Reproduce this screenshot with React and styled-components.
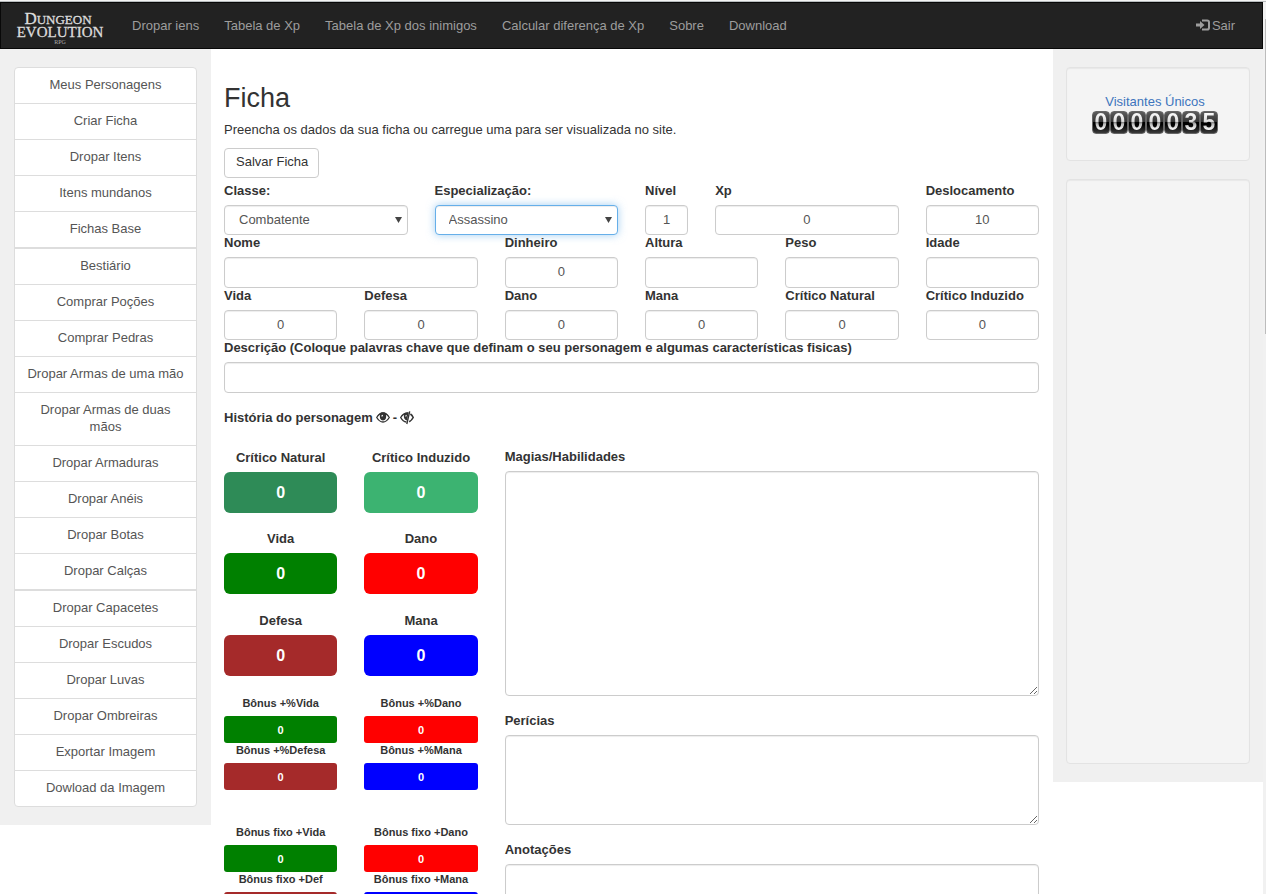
import React from "react";
import styled, { createGlobalStyle, css } from "styled-components";

const Global = createGlobalStyle`
  *, *::before, *::after { box-sizing: border-box; }
  body {
    margin: 0;
    background: #fff;
    color: #333;
    font: 13px/17px "Liberation Sans", Arial, sans-serif;
  }
  a { text-decoration: none; }
`;

const Shell = styled.div`
  display: grid;
  grid-template-columns: minmax(0, 1fr) 3px;
  height: 100vh;
  border-top: 1px solid #f4f4f4;
`;
const Page = styled.div`
  border-top: 1px solid #b8bcbe;
  overflow-y: auto;
  scrollbar-width: none;
`;
const Track = styled.div`
  background: #f1f1f1;
  border-top: 1px solid #b8bcbe;
  padding: 17px 0 0 2px;
`;
const Thumb = styled.div`
  height: 36%;
  background: #bcbcbc;
`;

const Navbar = styled.nav`
  display: flex;
  align-items: center;
  height: 47px;
  padding: 0 14px;
  background: #222;
  border: 1px solid #080808;
`;
const Brand = styled.a`
  display: block;
  margin-right: 15px;
  svg { display: block; }
`;
const NavLink = styled.a`
  padding: 0 13px 0 12px;
  color: #9d9d9d;
  white-space: nowrap;
`;
const Logout = styled(NavLink)`
  display: flex;
  align-items: center;
  gap: 2px;
  margin-left: auto;
`;

const Columns = styled.div`
  display: grid;
  grid-template-columns: 211px minmax(0, 1fr) 210px;
  align-items: start;
`;
const LeftColumn = styled.aside`
  padding: 18px 14px;
  background: #f0f0f0;
`;
const RightColumn = styled.aside`
  display: grid;
  gap: 18px;
  padding: 18px 13px;
  background: #f0f0f0;
`;
const Main = styled.main`
  padding: 35px 14px 18px 13px;
`;

const Menu = styled.div`
  &:first-child a:first-child { border-radius: 4px 4px 0 0; }
  &:last-child a:last-child { border-radius: 0 0 4px 4px; }
`;
const MenuItem = styled.a`
  display: block;
  padding: 8px 8px 10px;
  background: #fff;
  border: 1px solid #ddd;
  color: #555;
  text-align: center;
  & + & { margin-top: -1px; }
`;

const Well = styled.section`
  min-height: ${(p) => (p.$tall ? 585 : 94)}px;
  padding: 25px 22px 25px 16px;
  background: #f4f4f4;
  border: 1px solid #e3e3e3;
  border-radius: 4px;
  box-shadow: inset 0 1px 1px rgba(0, 0, 0, 0.05);
  text-align: center;
`;
const CounterLink = styled.a`
  color: #3d74bd;
`;
const Digits = styled.div`
  display: flex;
  justify-content: center;
  margin-top: 1px;
`;
const Digit = styled.span`
  width: 18px;
  height: 23px;
  border: 1px solid #666;
  border-radius: 4px;
  background: linear-gradient(#5c5c5c 0, #333 48%, #000 50%, #000 60%, #3a3a3a 100%);
  font: bold 23px/21px "Liberation Sans Narrow", "Liberation Sans", Arial, sans-serif;
  text-align: center;
  span {
    display: block;
    margin: 0 -1px;
    color: transparent;
    background: linear-gradient(#fff 0, #ddd 45%, #888 50%, #bbb 58%, #fff 85%);
    background-clip: text;
  }
`;

const Title = styled.h2`
  margin: 0 0 9px;
  font-size: 27px;
  font-weight: 400;
  line-height: 28px;
`;
const Intro = styled.p`
  margin: 0 0 10px;
`;
const SaveButton = styled.button`
  display: block;
  height: 30px;
  margin-bottom: 5px;
  padding: 0 10px 3px 11px;
  background: #fff;
  border: 1px solid #ccc;
  border-radius: 4px;
  color: #333;
  font: inherit;
`;

const Row = styled.div`
  display: grid;
  grid-template-columns: repeat(12, minmax(0, 1fr));
  column-gap: 27px;
`;
const Field = styled.div`
  display: flex;
  flex-direction: column;
  grid-column: span ${(p) => p.$span};
`;
const Label = styled.label`
  margin-bottom: 7px;
  font-weight: 700;
  line-height: 15px;
  white-space: nowrap;
`;
const control = css`
  width: 100%;
  border: 1px solid #ccc;
  border-radius: 4px;
  background: #fff;
  box-shadow: inset 0 1px 1px rgba(0, 0, 0, 0.075);
  color: #555;
  font: inherit;
  outline: 0;
`;
const Input = styled.input`
  ${control}
  flex: 1;
  min-height: ${(p) => (p.$free ? 31 : 30)}px;
  padding: 0 11px 2px;
  text-align: ${(p) => (p.$free ? "left" : "center")};
`;
const SelectBox = styled.div`
  display: grid;
  align-items: center;
  > * { grid-area: 1 / 1; }
  svg { justify-self: end; margin-right: 6px; pointer-events: none; }
`;
const Select = styled.select`
  ${control}
  height: 30px;
  padding: 0 14px 2px;
  appearance: none;
  ${(p) => p.$active && css`
    padding-left: 13px;
    border-color: #66afe9;
    box-shadow: inset 0 1px 1px rgba(0, 0, 0, 0.075), 0 0 8px rgba(102, 175, 233, 0.6);
  `}
`;

const Story = styled.div`
  display: flex;
  align-items: center;
  gap: 3px;
  margin: 16px 0 22px;
  font-weight: 700;
`;
const IconButton = styled.button`
  display: flex;
  padding: 0;
  border: 0;
  background: none;
  color: #333;
`;

const Stats = styled.div`
  grid-column: span 4;
  display: grid;
  grid-template-columns: repeat(2, minmax(0, 1fr));
  column-gap: 27px;
  align-content: start;
  padding-top: 1px;
`;
const Stat = styled.div`
  display: flex;
  flex-direction: column;
  margin-bottom: ${(p) => p.$after}px;
  text-align: center;
  font-weight: 700;
  font-size: ${(p) => (p.$small ? 11 : 13)}px;
  label {
    margin-bottom: ${(p) => (p.$small ? 5 : 6)}px;
    line-height: ${(p) => (p.$small ? 15 : 17)}px;
    white-space: nowrap;
  }
  input {
    width: 100%;
    height: ${(p) => (p.$small ? 27 : 41)}px;
    padding: 0;
    border: 0;
    border-radius: ${(p) => (p.$small ? 3 : 6)}px;
    background: ${(p) => p.$color};
    color: #fff;
    font: inherit;
    font-size: ${(p) => (p.$small ? 11 : 16)}px;
    text-align: center;
  }
`;
const Notes = styled.div`
  grid-column: span 8;
  padding-top: 1px;
`;
const Note = styled.div`
  display: flex;
  flex-direction: column;
  margin-bottom: 17px;
`;
const TextArea = styled.textarea`
  ${control}
  display: block;
  height: ${(p) => p.$height}px;
  padding: 6px 12px;
  resize: vertical;
`;

const Logo = () => (
  <svg width="90" height="40" viewBox="0 0 90 40" fill="#dcdcdc" stroke="#dcdcdc" strokeWidth="0.3" fontFamily="Liberation Serif, serif" textAnchor="middle">
    <text x="43" y="18" fontSize="17">D<tspan fontSize="13">UNGEON</tspan></text>
    <text x="45" y="31" fontSize="15">EVOLUTION</text>
    <text x="45" y="38" fontSize="6" fill="#aaa" stroke="none">RPG</text>
  </svg>
);
const LoginIcon = () => (
  <svg width="14" height="14" viewBox="0 0 14 14" aria-hidden="true">
    <path d="M6 1.500h5.200q1.800 0 1.800 1.800v5.400q0 1.800-1.800 1.800H6" fill="none" stroke="currentColor" strokeWidth="2" />
    <path d="M0 4.500h4V2L8.500 6 4 10V7.500H0z" fill="currentColor" />
  </svg>
);
const EyeIcon = () => (
  <svg width="14" height="14" viewBox="0 0 14 14" aria-hidden="true">
    <path d="M.7 6.500Q3.500 2 7 2t6.300 4.500Q10.500 11 7 11T.7 6.500z" fill="none" stroke="currentColor" strokeWidth="1.300" />
    <path d="M.7 6Q3.500 1.300 7 1.300T13.300 6Q11.500 4 10 3.600 11 9.300 7 9.500 3 9.300 4 3.600 2.500 4 .7 6z" fill="currentColor" />
    <path d="M5.200 5.600q.1-1.700 1.600-1.900l.3 1.600z" fill="#fff" />
  </svg>
);
const EyeClosedIcon = () => (
  <svg width="14" height="14" viewBox="0 0 14 14" aria-hidden="true">
    <path d="M8.200 2Q3.500 1.800.7 6.500 3 10.600 6.300 11" fill="none" stroke="currentColor" strokeWidth="1.400" />
    <path d="M.7 6Q3.500 1.300 8.700 1.500L6.900 9.400Q3.200 8.500 4 3.700 2.300 4.200.7 6z" fill="currentColor" />
    <path d="M5 5.600q.1-1.500 1.500-1.900l.3 1.500z" fill="#fff" />
    <path d="M9.700.3 6.800 13" stroke="currentColor" strokeWidth="1.400" />
    <path d="M10.400 3q1.700 1.200 2.800 3.500-1.400 2.800-4 4.200" fill="none" stroke="currentColor" strokeWidth="1.600" />
  </svg>
);

const navLinks = ["Dropar iens", "Tabela de Xp", "Tabela de Xp dos inimigos", "Calcular diferença de Xp", "Sobre", "Download"];
const menus = [
  ["Meus Personagens", "Criar Ficha", "Dropar Itens", "Itens mundanos", "Fichas Base"],
  ["Bestiário", "Comprar Poções", "Comprar Pedras", "Dropar Armas de uma mão", "Dropar Armas de duas mãos", "Dropar Armaduras", "Dropar Anéis", "Dropar Botas", "Dropar Calças"],
  ["Dropar Capacetes", "Dropar Escudos", "Dropar Luvas", "Dropar Ombreiras", "Exportar Imagem", "Dowload da Imagem"],
];
const details = [
  { id: "nome", label: "Nome", span: 4, free: true },
  { id: "dinheiro", label: "Dinheiro", span: 2, value: "0" },
  { id: "altura", label: "Altura", span: 2, free: true },
  { id: "peso", label: "Peso", span: 2, free: true },
  { id: "idade", label: "Idade", span: 2, free: true },
];
const attributes = ["Vida", "Defesa", "Dano", "Mana", "Crítico Natural", "Crítico Induzido"].map((label) => ({
  id: "attr-" + label, label, span: 2, value: "0",
}));
const stats = [
  ["Crítico Natural", "seagreen", 17],
  ["Crítico Induzido", "mediumseagreen", 17],
  ["Vida", "green", 18],
  ["Dano", "red", 18],
  ["Defesa", "brown", 20],
  ["Mana", "blue", 20],
  ["Bônus +%Vida", "green", 0, true],
  ["Bônus +%Dano", "red", 0, true],
  ["Bônus +%Defesa", "brown", 35, true],
  ["Bônus +%Mana", "blue", 35, true],
  ["Bônus fixo +Vida", "green", 0, true],
  ["Bônus fixo +Dano", "red", 0, true],
  ["Bônus fixo +Def", "brown", 35, true],
  ["Bônus fixo +Mana", "blue", 35, true],
];
const notes = [["Magias/Habilidades", 225], ["Perícias", 90], ["Anotações", 90]];

const TextField = ({ id, label, span, value = "", free }) => (
  <Field $span={span}>
    <Label htmlFor={id}>{label}</Label>
    <Input id={id} defaultValue={value} $free={free} />
  </Field>
);
const SelectField = ({ id, label, option, active }) => (
  <Field $span={3}>
    <Label htmlFor={id}>{label}</Label>
    <SelectBox>
      <Select id={id} $active={active}><option>{option}</option></Select>
      <svg width="7" height="7" viewBox="0 0 7 7" aria-hidden="true"><path d="M0 0h7L3.500 6z" fill="#444" /></svg>
    </SelectBox>
  </Field>
);

export default function App() {
  return (
    <Shell>
      <Global />
      <Page>
        <Navbar>
          <Brand href="#" aria-label="Dungeon Evolution RPG"><Logo /></Brand>
          {navLinks.map((text) => <NavLink href="#" key={text}>{text}</NavLink>)}
          <Logout href="#"><LoginIcon />Sair</Logout>
        </Navbar>
        <Columns>
          <LeftColumn>
            {menus.map((items) => (
              <Menu key={items[0]}>
                {items.map((text) => <MenuItem href="#" key={text}>{text}</MenuItem>)}
              </Menu>
            ))}
          </LeftColumn>
          <Main>
            <Title>Ficha</Title>
            <Intro>Preencha os dados da sua ficha ou carregue uma para ser visualizada no site.</Intro>
            <SaveButton type="button">Salvar Ficha</SaveButton>
            <Row>
              <SelectField id="classe" label="Classe:" option="Combatente" />
              <SelectField id="especializacao" label="Especialização:" option="Assassino" active />
              <TextField id="nivel" label="Nível" span={1} value="1" />
              <TextField id="xp" label="Xp" span={3} value="0" />
              <TextField id="deslocamento" label="Deslocamento" span={2} value="10" />
            </Row>
            <Row>{details.map((f) => <TextField key={f.id} {...f} />)}</Row>
            <Row>{attributes.map((f) => <TextField key={f.id} {...f} />)}</Row>
            <Row>
              <TextField id="descricao" span={12} free label="Descrição (Coloque palavras chave que definam o seu personagem e algumas características fisicas)" />
            </Row>
            <Story>
              História do personagem
              <IconButton type="button" aria-label="Mostrar história"><EyeIcon /></IconButton>
              -
              <IconButton type="button" aria-label="Esconder história"><EyeClosedIcon /></IconButton>
            </Story>
            <Row>
              <Stats>
                {stats.map(([label, color, after, small]) => (
                  <Stat key={label} $color={color} $after={after} $small={small}>
                    <label htmlFor={"stat-" + label}>{label}</label>
                    <input id={"stat-" + label} defaultValue="0" readOnly />
                  </Stat>
                ))}
              </Stats>
              <Notes>
                {notes.map(([label, height]) => (
                  <Note key={label}>
                    <Label htmlFor={"note-" + label}>{label}</Label>
                    <TextArea id={"note-" + label} $height={height} />
                  </Note>
                ))}
              </Notes>
            </Row>
          </Main>
          <RightColumn>
            <Well>
              <CounterLink href="#">Visitantes Únicos</CounterLink>
              <Digits>
                {[..."0000035"].map((d, i) => <Digit key={i}><span>{d}</span></Digit>)}
              </Digits>
            </Well>
            <Well $tall />
          </RightColumn>
        </Columns>
      </Page>
      <Track><Thumb /></Track>
    </Shell>
  );
}
